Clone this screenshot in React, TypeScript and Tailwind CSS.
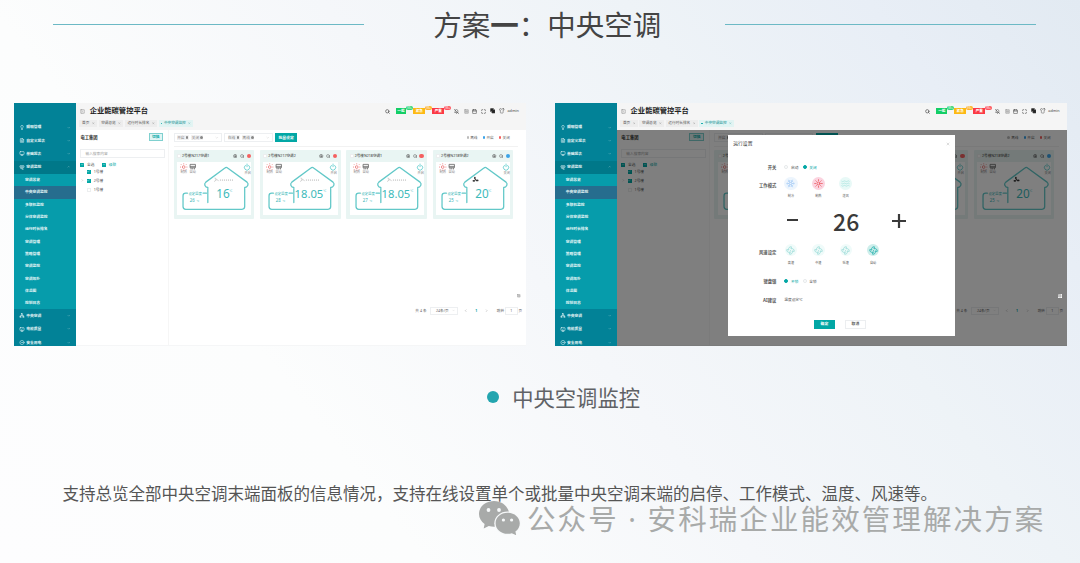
import React from 'react';
import clsx from 'clsx';
import {
  AirVent, BellOff, Calendar, ChevronDown, ChevronLeft, ChevronRight, ChevronUp, CircleDot, Copy, Fan,
  FileText, Lightbulb, Maximize, Monitor, MonitorCheck, Network, PanelLeftClose, Search, Settings,
  Shirt, Snowflake, Sun, Waves, X, Check, SquareMenu,
} from 'lucide-react';

const topMenu = [
  { icon: Lightbulb, label: '照明管理' },
  { icon: FileText, label: '自定义报表' },
  { icon: Monitor, label: '基础报表' },
];

const subMenu = [
  '空调总览', '中央空调监控', '多联机监控', '分体空调监控', '运行时长排名',
  '空调管理', '策略管理', '空调监控', '空调拓扑', '体温图', '控制日志',
];

const bottomMenu = [
  { icon: Network, label: '中央空调' },
  { icon: MonitorCheck, label: '电能质量' },
  { icon: CircleDot, label: '安全用电' },
];

const alarms = [
  { label: '一般', box: 'w-[10.6px] bg-[#13ce66]', badge: 'bg-[#2fd67a]' },
  { label: '紧急', box: 'w-[12px] bg-[#fdb913]', badge: 'bg-[#fdb32f]' },
  { label: '严重', box: 'w-[12px] bg-[#fb3a45]', badge: 'bg-[#fd5560]' },
];

const cards = [
  { name: '2号楼N217空调1', temp: '16', set: '26', dot: 'bg-[#f56060]', power: '开启', slow: false },
  { name: '2号楼N217空调2', temp: '18.05', set: '28', dot: 'bg-[#f56060]', power: '开启', slow: false },
  { name: '2号楼N218空调1', temp: '18.05', set: '27', dot: 'bg-[#f56060]', power: '开启', slow: false },
  { name: '2号楼N218空调2', temp: '20', set: '25', dot: 'bg-[#3ba3e8]', power: '关闭', slow: true },
];

type Card = (typeof cards)[number];

function MenuRow({ icon: Icon, label, open }: { icon: React.ElementType; label: string; open?: boolean }) {
  return (
    <div className={clsx('flex h-[13.33px] shrink-0 items-center pl-[4.5px] pr-[5px] text-[#e4f3f5]', open && 'bg-[#007889]')}>
      <Icon className="h-[5px] w-[6px]" strokeWidth={2.6} />
      <span className="ml-[1.5px] text-[3.75px] font-bold">{label}</span>
      {open
        ? <ChevronUp className="ml-auto size-[3.5px] opacity-80" />
        : <ChevronDown className="ml-auto size-[3.5px] opacity-80" />}
    </div>
  );
}

function Sidebar() {
  return (
    <div className="flex w-[61.7px] shrink-0 flex-col overflow-hidden bg-[#028297] pt-[17.6px]">
      {topMenu.map((m) => <MenuRow key={m.label} {...m} />)}
      <MenuRow icon={AirVent} label="空调监控" open />
      <div className="flex flex-col bg-[#069cab]">
        {subMenu.map((label, i) => (
          <div
            key={label}
            className={clsx(
              'flex h-[12.3px] items-center pl-[10.7px] text-[3.75px] font-bold text-[#e4f5f6]',
              i === 1 && 'bg-[#266d8e]'
            )}
          >
            {label}
          </div>
        ))}
      </div>
      {bottomMenu.map((m) => <MenuRow key={m.label} {...m} />)}
    </div>
  );
}

function Header() {
  return (
    <div className="flex h-[26.7px] shrink-0 flex-col bg-[#f5f5f5] pl-[3.6px] text-[#444]">
      <div className="flex h-[16px] items-center pl-[1px] pr-[7px]">
        <PanelLeftClose className="size-[5px] text-[#888]" />
        <span className="ml-[4.2px] text-[7.3px] font-bold text-[#222]">企业能碳管控平台</span>
        <Search className="ml-auto mr-[6px] size-[5px]" strokeWidth={3} />
        <div className="mr-[2.5px] flex items-center">
          {alarms.map((a) => (
            <div key={a.label} className="flex items-center">
              <span className={clsx('flex h-[6px] items-center justify-center text-[3.6px] font-bold text-white', a.box)}>{a.label}</span>
              <span className={clsx('-ml-[0.5px] mb-[6px] flex h-[4.4px] w-[7.6px] items-center justify-center rounded-full text-[2.8px] text-white', a.badge)}>99+</span>
            </div>
          ))}
        </div>
        <div className="flex items-center gap-[3.8px]">
          <BellOff className="size-[5px]" strokeWidth={2.6} />
          <SquareMenu className="ml-[1.2px] size-[5px] text-[#777]" />
          <Calendar className="-ml-[0.5px] size-[5px]" strokeWidth={2.6} />
          <Maximize className="size-[5px]" strokeWidth={2.6} />
          <Copy className="size-[5.5px] fill-[#222]" strokeWidth={2.6} />
          <Shirt className="size-[5.5px]" />
          <span className="ml-[-1px] text-[3.8px]">admin</span>
        </div>
      </div>
      <div className="mt-[0.8px] flex gap-[1.4px] text-[3.65px] text-[#555]">
        {['首页', '空调总览', '运行时长排名'].map((tab) => (
          <div key={tab} className="flex h-[7px] items-center gap-[2.6px] bg-[#ededed] px-[2.6px]">
            {tab}
            <X className="size-[2.6px]" />
          </div>
        ))}
        <div className="flex h-[7px] items-center bg-[#e2f4f3] px-[2px] text-[#128f92]">
          <span className="mr-[1.8px] size-[1.6px] rounded-full bg-[#02a7a5]" />
          中央空调监控
          <X className="ml-[2.6px] size-[2.6px]" />
        </div>
      </div>
    </div>
  );
}

function Box({ checked }: { checked?: boolean }) {
  return (
    <span className={clsx('flex size-[4px] shrink-0 items-center justify-center border', checked ? 'border-[#02a7a5] bg-[#02a7a5]' : 'border-[#eceeef] bg-white')}>
      {checked && <Check className="size-[3px] shrink-0 text-white/70" strokeWidth={4} />}
    </span>
  );
}

function TreePanel() {
  return (
    <div className="flex w-[93.3px] shrink-0 flex-col border-r border-[#f6f6f6] pl-[4.6px] pr-[3px] pt-[3.6px] text-[3.7px] text-[#555]">
      <div className="flex h-[8px] items-center justify-between pr-[2.2px]">
        <span className="text-[4.3px] font-bold text-[#333]">电工集团</span>
        <span className="flex h-[7.6px] w-[14.4px] items-center justify-center border border-[#7fd0cf] bg-[#e0f5f4] font-bold text-[#02a7a5]">切换</span>
      </div>
      <div className="mt-[8px] flex h-[8.7px] items-center border border-[#edeff1] pl-[4px] text-[#999]">输入搜索内容</div>
      <div className="mt-[3.6px] flex h-[6px] items-center">
        <Box checked />
        <span className="ml-[2.6px] w-[15.2px]">全选</span>
        <Box checked />
        <span className="ml-[2.6px] text-[#02a7a5]">级联</span>
      </div>
      <div className="mt-[-0.6px] flex flex-col pl-[6.4px]">
        {['1号楼', '2号楼', '1号楼'].map((label, i) => (
          <div key={i} className="flex h-[9.1px] items-center gap-[2.8px]">
            <Box checked={i < 2} />
            {label}
            {i === 1 && <ChevronRight className="order-first -ml-[5.6px] size-[2.8px]" />}
          </div>
        ))}
      </div>
    </div>
  );
}

function FilterSelect({ items }: { items: string[] }) {
  return (
    <div className="flex h-[9px] w-[48.2px] items-center gap-[2.4px] border border-[#edeff1] px-[2.2px] text-[3.6px] text-[#888]">
      {items.map((item) => (
        <span key={item} className="flex h-[5px] items-center gap-[1.4px] bg-[#f2f2f3] px-[0.5px]">
          {item}
          <span className="size-[2.6px] rounded-full bg-[#888]" />
        </span>
      ))}
      <ChevronDown className="ml-auto size-[3.6px] text-[#bbb]" />
    </div>
  );
}

// air conditioner state drawn inside a house outline, 3 units per pixel
function House({ card }: { card: Card }) {
  const wide = card.temp.length > 2;
  return (
    <svg viewBox="0 0 222 158" className="h-[53px] w-[74.4px] overflow-visible bg-white">
      <g fill="none" stroke="#62c8c8" strokeWidth="3.8" strokeLinecap="round" strokeLinejoin="round">
        <path d="M92 121V76C84 76 79 66 86 60L143 18Q147 14 151 18L209 60C216 66 210 76 202 76V133Q202 141 194 141H26Q18 141 18 133V101Q18 93 26 93H31" />
        <path d="M78 93H88" />
      </g>
      <g fill="none" stroke="#e85a5a" strokeWidth="2">
        <circle cx="20" cy="15" r="4" />
        <path d="M20 7V4M20 23V26M12 15H9M28 15H31M14 9L12 7M26 21L28 23M14 21L12 23M26 9L28 7" />
      </g>
      <path d="M39 7H55V17H39ZM39 13H55M42 17V22M52 17V22M47 17V22" fill="none" stroke="#666" strokeWidth="2.4" />
      <path d="M204 10A8 8 0 1 0 214 10M209 6V14" fill="none" stroke="#38c0c0" strokeWidth="2" strokeLinecap="round" />
      <g fontSize="9.5" fill="#888" textAnchor="middle">
        <text x="20" y="34">制热</text>
        <text x="47" y="34">自动</text>
        <text x="211" y="37">{card.power}</text>
      </g>
      {card.slow ? (
        <g fill="#333">
          <circle cx="118" cy="53" r="2" />
          <ellipse cx="116" cy="48" rx="2.5" ry="4" />
          <ellipse cx="113" cy="56" rx="4" ry="2.5" />
          <ellipse cx="123" cy="55" rx="4" ry="2.5" />
        </g>
      ) : (
        <>
          <path d="M112 48q6-1 4 5q-2 5-5 5M116 53q6-2 8 4" fill="none" stroke="#bbb" strokeWidth="2" />
          <path d="M128 54H170" stroke="#d4d4d4" strokeWidth="5" strokeDasharray="3 3" />
        </>
      )}
      <text x="54" y="97" fontSize="10" fill="#35b5b5" textAnchor="middle">设定温度</text>
      <text x="38" y="120" fontSize="13" fill="#35b5b5">{card.set}<tspan fontSize="8" dx="5">℃</tspan></text>
      <text x="137" y="108" fontSize={wide ? 33.5 : 35} fill="#3dbaba" textAnchor="middle">{card.temp}</text>
      <text x={wide ? 179 : 155} y="88" fontSize="10" fill="#3dbaba">℃</text>
    </svg>
  );
}

function DeviceCard({ card }: { card: Card }) {
  return (
    <div className="flex h-[69px] w-[80.6px] flex-col rounded-[1px] bg-[#e9f5f3] px-[3.2px]">
      <div className="flex h-[11.8px] shrink-0 items-center text-[#555]">
        <Box />
        <span className="ml-[1.2px] text-[3.6px] font-medium">{card.name}</span>
        <Settings className="ml-auto size-[4.4px]" strokeWidth={3} />
        <Search className="ml-[2.4px] size-[4.4px]" strokeWidth={2.6} />
        <span className={clsx('ml-[2.4px] size-[4.4px] rounded-full', card.dot)} />
      </div>
      <House card={card} />
    </div>
  );
}

const legend = [
  { label: '离线', dot: 'bg-[#bbb]' },
  { label: '开启', dot: 'bg-[#3ba3e8]' },
  { label: '关闭', dot: 'bg-[#f56060]' },
];

function Content() {
  return (
    <div className="flex min-w-0 flex-1 flex-col pl-[4.4px] text-[3.6px] text-[#666]">
      <div className="mr-[8px] flex h-[17px] shrink-0 items-center gap-[2.6px] border-b border-[#f2f2f2]">
        <FilterSelect items={['开启', '关闭']} />
        <FilterSelect items={['在线', '离线']} />
        <span className="flex h-[8.4px] w-[22px] items-center justify-center bg-[#02a7a5] text-[3.8px] font-bold text-white">批量设定</span>
        <div className="ml-auto flex gap-[5.2px] pr-[8px]">
          {legend.map((l) => (
            <span key={l.label} className="flex items-center gap-[1.4px]">
              <span className={clsx('size-[2.4px] rounded-full', l.dot)} />
              {l.label}
            </span>
          ))}
        </div>
      </div>
      <div className="mt-[3.2px] flex gap-[5.8px]">
        {cards.map((card) => <DeviceCard key={card.name} card={card} />)}
      </div>
      <div className="mb-[8.2px] mt-auto flex justify-end pr-[4.5px]">
        <span className="relative z-10 flex size-[4.6px] items-center justify-center bg-white"><SquareMenu className="size-[3.6px]" /></span>
      </div>
      <div className="mb-[30.8px] flex h-[8px] shrink-0 items-center justify-end pr-[3.6px]">
        <span>共 4 条</span>
        <span className="ml-[4px] flex h-[8px] w-[27.5px] items-center justify-between border border-[#edeff1] pl-[4.5px] pr-[1.5px]">
          24条/页
          <ChevronDown className="size-[3px] text-[#bbb]" />
        </span>
        <ChevronLeft className="ml-[6px] size-[3.4px]" />
        <span className="mx-[7.8px] font-bold text-[#02a7a5]">1</span>
        <ChevronRight className="size-[3.4px]" />
        <span className="ml-[8.4px]">跳转</span>
        <span className="mx-[0.8px] flex h-[8px] w-[13px] items-center justify-center border border-[#edeff1]">1</span>
        <span>页</span>
      </div>
    </div>
  );
}

function Radio({ checked, label }: { checked?: boolean; label: string }) {
  return (
    <span className={clsx('flex w-[18.3px] items-center gap-[2.8px] text-[3.7px]', checked ? 'text-[#02a7a5]' : 'text-[#555]')}>
      <span className={clsx('size-[4px] rounded-full border', checked ? 'border-[#02a7a5] bg-[#02a7a5]' : 'border-[#e6e9eb]')} />
      {label}
    </span>
  );
}

function RowLabel({ children }: { children: React.ReactNode }) {
  return <span className="mr-[8px] w-[48px] shrink-0 text-right text-[4.3px] font-bold text-[#555]">{children}</span>;
}

const modes = [
  { icon: Snowflake, label: '制冷', tone: 'bg-[#edf5fd] text-[#a9cdf5]' },
  { icon: Sun, label: '制热', tone: 'bg-[#fbd3df] text-[#e8484e]' },
  { icon: Waves, label: '送风', tone: 'bg-[#e8f9f7] text-[#a5e3dd]' },
];

const speeds = [
  { label: '高速', tone: 'bg-[#f0fbfa] text-[#9bdcd8]' },
  { label: '中速', tone: 'bg-[#f0fbfa] text-[#9bdcd8]' },
  { label: '低速', tone: 'bg-[#f0fbfa] text-[#9bdcd8]' },
  { label: '自动', tone: 'bg-[#cdeeeb] text-[#24b0ac]' },
];

function SettingsDialog() {
  return (
    <div className="absolute left-[173.2px] top-[32px] flex h-[201px] w-[226.3px] flex-col bg-white text-[#555]">
      <div className="flex h-[17px] shrink-0 items-center justify-between px-[5px]">
        <span className="text-[4.8px] text-[#333]">运行设置</span>
        <X className="size-[4px] text-[#999]" />
      </div>
      <div className="mt-[12.4px] flex h-[6px] shrink-0 items-center">
        <RowLabel>开关</RowLabel>
        <Radio label="启动" />
        <Radio label="关闭" checked />
      </div>
      <div className="mt-[6.6px] flex h-[21px] shrink-0">
        <div className="flex h-[17px] items-center"><RowLabel>工作模式</RowLabel></div>
        <div className="flex gap-[14.1px]">
          {modes.map(({ icon: Icon, label, tone }) => (
            <div key={label} className="flex w-[13.3px] flex-col items-center">
              <span className={clsx('flex size-[13.3px] shrink-0 items-center justify-center rounded-full', tone)}>
                <Icon className="size-[9px]" strokeWidth={2} />
              </span>
              <span className="mt-[4px] text-[3.1px] leading-[4px]">{label}</span>
            </div>
          ))}
        </div>
      </div>
      <div className="flex h-[50px] shrink-0 items-center pl-[59px] text-[#3a3a3a]">
        <span className="mb-[5px] h-[2px] w-[10.8px] bg-[#3a3a3a]" />
        <span className="mb-[4px] ml-[35px] w-[25.5px] text-center font-['Noto_Sans_CJK_SC',sans-serif] text-[23px] font-medium leading-[20px]">26</span>
        <svg viewBox="0 0 14 14" className="mb-[4.5px] ml-[33px] size-[14px]" fill="none" stroke="currentColor" strokeWidth="2.2">
          <path d="M7 0v14M0 7h14" />
        </svg>
      </div>
      <div className="mt-[-4px] flex h-[22px] shrink-0">
        <div className="flex h-[16px] items-center"><RowLabel>风速设定</RowLabel></div>
        <div className="flex gap-[14.1px]">
          {speeds.map(({ label, tone }) => (
            <div key={label} className="flex w-[13.3px] flex-col items-center">
              <span className={clsx('flex size-[12.4px] shrink-0 items-center justify-center rounded-full', tone)}>
                <Fan className="size-[9px]" strokeWidth={2.2} />
              </span>
              <span className="mt-[4.2px] text-[3.1px] leading-[4px]">{label}</span>
            </div>
          ))}
        </div>
      </div>
      <div className="mt-[12.4px] flex h-[6px] shrink-0 items-center">
        <RowLabel>键盘锁</RowLabel>
        <Radio label="不锁" checked />
        <Radio label="全锁" />
      </div>
      <div className="mt-[12.9px] flex h-[6px] shrink-0 items-center">
        <RowLabel>AI建议</RowLabel>
        <span className="text-[3.7px]">温度设定℃</span>
      </div>
      <div className="mb-[7.4px] mt-auto flex justify-center gap-[10.6px] pr-[3px] text-[3.8px] font-bold">
        <span className="flex h-[9px] w-[20.4px] items-center justify-center bg-[#02a7a5] text-white">确定</span>
        <span className="flex h-[9px] w-[20.4px] items-center justify-center border border-[#eceef0]">取消</span>
      </div>
    </div>
  );
}

function Dashboard({ dialog }: { dialog?: boolean }) {
  return (
    <div className="relative flex h-[243.3px] w-[511.6px] overflow-hidden bg-white leading-none">
      <Sidebar />
      <div className="flex min-w-0 flex-1 flex-col">
        <Header />
        <div className="relative flex min-h-0 flex-1 border-b-[1.5px] border-[#f5f6f7]">
          <TreePanel />
          <Content />
          {dialog && <div className="absolute inset-x-0 -bottom-[2px] top-0 bg-black/50" />}
        </div>
      </div>
      {dialog && <SettingsDialog />}
    </div>
  );
}

function WechatLogo() {
  return (
    <svg viewBox="0 0 42 34" className="h-[34px] w-[42px]">
      <path d="M15 0C6.5 0 0 5.7 0 13c0 4 2.2 7.5 5.6 9.9L4.7 27.5l5.1-2.6c1.6.5 3.4.8 5.2.8C23.5 25.7 30 20 30 13S23.5 0 15 0z" fill="#a8aaa9" />
      <ellipse cx="28.6" cy="22.3" rx="13.3" ry="11.8" fill="#f7f9fa" />
      <path d="M28.6 11.7c-6.7 0-12 4.6-12 10.5s5.3 10.6 12 10.6c1.5 0 2.9-.2 4.2-.6l4.4 2-.8-3.6c2.7-2 4.4-5 4.4-8.4 0-5.9-5.5-10.5-12.2-10.5z" fill="#a8aaa9" />
      <g fill="#f7f9fa">
        <circle cx="9.5" cy="9" r="1.9" />
        <circle cx="20" cy="9" r="1.9" />
        <circle cx="24.4" cy="19" r="1.6" />
        <circle cx="32.6" cy="19" r="1.6" />
      </g>
    </svg>
  );
}

export default function App() {
  return (
    <div className="relative flex h-[563px] w-[1080px] flex-col overflow-hidden bg-[linear-gradient(52deg,#fdfdfe_0%,#fcfdfd_28%,#f5f7fa_50%,#eef3f7_70%,#e8eef6_86%,#e2eaf2_100%)] font-['Noto_Sans','Noto_Sans_CJK_SC',sans-serif]">
      <div className="flex h-[103px] shrink-0 justify-between pl-[53px] pr-[43.5px]">
        <div className="mt-[23.5px] h-[1.5px] w-[311px] bg-[#6cb9c5]" />
        <h1 className="mt-[4px] pl-[5px] text-[28.5px] leading-[42px] text-[#444]">
          方案<span className="font-bold">一</span>：中央空调
        </h1>
        <div className="mt-[23.5px] h-[1.5px] w-[311px] bg-[#6cb9c5]" />
      </div>

      <div className="flex shrink-0 gap-[29.3px] pl-[14.2px]">
        <Dashboard />
        <Dashboard dialog />
      </div>

      <div className="mt-[35px] flex h-[32px] shrink-0 items-center pl-[486.7px]">
        <span className="size-[12px] rounded-full bg-[#23a5af]" />
        <span className="ml-[13.5px] text-[21.3px] leading-none text-[#606266]">中央空调监控</span>
      </div>

      <p className="mt-[72px] whitespace-nowrap pl-[62.5px] text-[16.5px] leading-[18px] text-[#555]">
        支持总览全部中央空调末端面板的信息情况，支持在线设置单个或批量中央空调末端的启停、工作模式、温度、风速等。
      </p>

      <div className="absolute left-[479px] top-[501px] flex items-center text-[#a8aaa9]">
        <WechatLogo />
        <div className="ml-[6px] whitespace-nowrap pt-[1px] text-[28.5px] leading-[30px] tracking-[2.1px]">公众号 · 安科瑞企业能效管理解决方案</div>
      </div>
    </div>
  );
}
